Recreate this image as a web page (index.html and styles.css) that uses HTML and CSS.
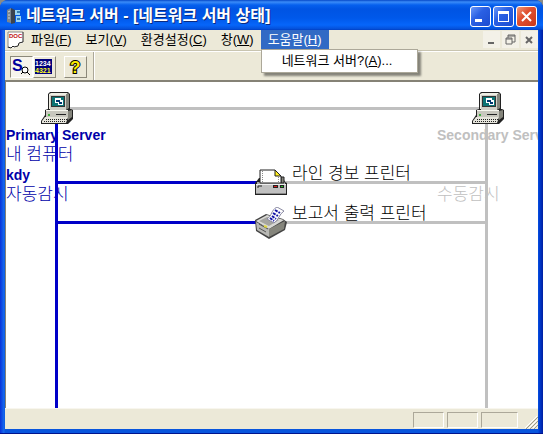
FILE: index.html
```
<!DOCTYPE html>
<html lang="ko">
<head>
<meta charset="UTF-8" />
<title>네트워크 서버 - [네트워크 서버 상태]</title>
<meta name="viewport" content="width=device-width, initial-scale=1" />
<link rel="stylesheet" href="styles.css">
</head>
<body>

<!-- shared icon -->
<svg class="defs" aria-hidden="true">
  <symbol id="computer" viewBox="0 0 32 32">
    <path d="M7 2l2-2h18l2 2v15h1l2 1v9l-5 5H0v-3l4-6V18l3-1z" fill="#222"/>
    <path d="M8 2l2-1h17l-2 2v14H8z" fill="#efeee4"/>
    <path d="M25 3l2-2 1 1v14l-3 2z" fill="#85857c"/>
    <path d="M9 3h16v15H9z" fill="#d0cfc6"/>
    <path d="M10 4h14v11H10z" fill="#333"/>
    <path d="M11 5h12v9H11z" fill="#0c7474"/>
    <path d="M14 6h6v5h-6zM17 8h5v5h-5z" fill="#fff"/>
    <path d="M15 8h4v2h-4zM18 10h3v2h-3z" fill="#003870"/>
    <path d="M5 19h22v6H5z" fill="#c8c7be"/>
    <path d="M5 18h22v1H5z" fill="#f8f8f0"/>
    <path d="M27 19l4-1v7l-4 3z" fill="#85857c"/>
    <path d="M7 22h2v2H7z" fill="#40b040"/>
    <path d="M15 22h10v1H15z" fill="#222"/>
    <path d="M4 25h23l-2 6H1v-2z" fill="#e6e5dc"/>
    <path d="M5 27.500h21M3 29.500h21" stroke="#222" stroke-dasharray="1 1"/>
  </symbol>
</svg>

<div class="window">
  <header class="titlebar">
    <svg class="app-icon" viewBox="0 0 16 16" aria-hidden="true">
      <path d="M1 2l4-2v15l-4-1z" fill="#7c858c"/>
      <path d="M5 0l4 2v13l-4 1z" fill="#3c444e"/>
      <path d="M2 4l2-1M2 7h2M2 10h2" stroke="#c8d4dc"/>
      <path d="M9 2h5v5H9zM10 8h5v6h-5z" fill="#9bd4f2"/>
      <path d="M11 3h3v2h-3zM11 10h3v2h-3z" fill="#397eaf"/>
    </svg>
    <h1>네트워크 서버 - [네트워크 서버 상태]</h1>
    <div class="caption-buttons">
      <button class="caption" aria-label="최소화"><svg viewBox="0 0 19 19"><path d="M4 12h7v3H4z" fill="#fff"/></svg></button>
      <button class="caption" aria-label="최대화"><svg viewBox="0 0 19 19"><path d="M4 4h11v11H4zM5 7v7h9V7z" fill="#fff" fill-rule="evenodd"/></svg></button>
      <button class="caption close" aria-label="닫기"><svg viewBox="0 0 19 19"><path d="M5 5l9 9M14 5l-9 9" stroke="#fff" stroke-width="2"/></svg></button>
    </div>
  </header>

  <nav class="menubar">
    <svg class="doc-icon" viewBox="0 0 16 16" aria-hidden="true">
      <path d="M0 0h15v11l-4 1-2 3-3 1-3-1-3 1z" fill="#fff"/>
      <path d="M0 16V0h15" stroke="#888" fill="none"/>
      <path d="M15 0v10l-4 1-1 3-4 1-1-1-2 2-3-1" stroke="#222" fill="none"/>
      <text x="1" y="6">DOC</text>
    </svg>
    <button class="menu">파일(<u>F</u>)</button>
    <button class="menu">보기(<u>V</u>)</button>
    <button class="menu">환경설정(<u>C</u>)</button>
    <button class="menu">창(<u>W</u>)</button>
    <div class="menu-wrap">
      <button class="menu open" aria-expanded="true">도움말(<u>H</u>)</button>
      <div class="dropdown">
        <button>네트워크 서버?(<u>A</u>)...</button>
      </div>
    </div>
    <div class="mdi-buttons">
      <button aria-label="창 최소화"><svg viewBox="0 0 16 16"><path d="M5 10h6v2H5z" fill="#666"/></svg></button>
      <button aria-label="창 복원"><svg viewBox="0 0 16 16"><path d="M6 6V3h7v7h-3M6 4h7M4 6h6v6H4zM4 7h6" fill="none" stroke="#666"/></svg></button>
      <button aria-label="창 닫기"><svg viewBox="0 0 16 16"><path d="M5 5l6 6M11 5l-6 6" stroke="#666" stroke-width="2"/></svg></button>
    </div>
  </nav>

  <div class="toolbar">
    <div class="tools">
      <button class="tool pressed" aria-label="상태 보기">
        <svg viewBox="0 0 20 20" aria-hidden="true"><text class="glyph-s" x="1" y="14">S</text><circle cx="14" cy="13" r="3" fill="#fff" stroke="#000"/><path d="M12 15l-2 2M16 15l3 3" stroke="#000"/></svg>
      </button>
      <button class="tool" aria-label="번호 보기">
        <svg viewBox="0 0 20 20" aria-hidden="true"><path d="M1 2h17v15H1z" fill="#00007c"/><text class="glyph-n" x="1" y="9">1234</text><text class="glyph-n yellow" x="1" y="16">4321</text></svg>
      </button>
      <button class="tool help" aria-label="도움말">
        <svg viewBox="0 0 20 20" aria-hidden="true"><text class="glyph-q" x="5" y="16">?</text></svg>
      </button>
    </div>
  </div>

  <main class="diagram">
    <div class="server primary">
      <p>Primary Server</p>
      <p>내 컴퓨터</p>
      <p>kdy</p>
      <p>자동감시</p>
    </div>
    <div class="server secondary">
      <p>Secondary Server</p>
      <p></p>
      <p></p>
      <p>수동감시</p>
    </div>

    <i class="line top"></i>
    <i class="line row1 idle"></i>
    <i class="line row2 idle"></i>
    <i class="line row1 active"></i>
    <i class="line row2 active"></i>
    <i class="line down idle-down"></i>
    <i class="line down active-down"></i>

    <svg class="node pc-left" aria-hidden="true"><use href="#computer"/></svg>
    <svg class="node pc-right" aria-hidden="true"><use href="#computer"/></svg>

    <svg class="node device1" viewBox="0 0 32 32" aria-hidden="true">
      <path d="M1 14l3-4h24l2 4 2 1v12H0V15z" fill="#222"/>
      <path d="M2 14h28v2H2z" fill="#aaa"/>
      <path d="M26 9h3v6h-3z" fill="#85857c" stroke="#222"/>
      <path d="M5 2h15l6 6v7H5z" fill="#fff" stroke="#222"/>
      <path d="M7.500 3v12M23.500 9v6" stroke="#888" stroke-dasharray="1 1"/>
      <path d="M20 2v6h6z" fill="#ffef20" stroke="#222"/>
      <path d="M1 16h30v10H1z" fill="#c0c0c0"/>
      <path d="M1 16.500h30" stroke="#eee"/>
      <path d="M1 25.500h30" stroke="#888"/>
      <path d="M3 20v-2h4" stroke="#222" fill="none"/>
      <path d="M18 17h5v3h-5zM25 17h4v3h-4z" fill="#222"/>
      <path d="M19 18h3v1h-3z" fill="#e02020"/>
      <path d="M26 18h2v1h-2z" fill="#20c020"/>
    </svg>
    <svg class="node device2" viewBox="0 0 32 32" aria-hidden="true">
      <path d="M0 13l11-6 17 5 4 3-2 8-16 9L1 24z" fill="#444"/>
      <path d="M1 14l11-6 17 5-15 9z" fill="#d8d8d4"/>
      <path d="M1 15l13 7v8L2 23z" fill="#b8b8b4"/>
      <path d="M14 22l16-8-1 8-15 8z" fill="#85857c"/>
      <path d="M4 14l8-4 12 3-10 6z" fill="#a4a4a0"/>
      <path d="M12 12c5-3 4-9 10-12l7 4c-5 3-5 9-10 12z" fill="#fff" stroke="#8888a0"/>
      <path d="M20 3l5 3M18 6l5 3M17 9l4 3M15 11l4 3" stroke="#1515a5" stroke-width="2" stroke-dasharray="3 1"/>
      <path d="M4 17l9 5M4 21l7 4" stroke="#555"/>
      <path d="M9 19l3 1" stroke="#e0d840" stroke-width="2"/>
    </svg>

    <p class="device-name name1">라인 경보 프린터</p>
    <p class="device-name name2">보고서 출력 프린터</p>
  </main>

  <footer class="statusbar">
    <span class="pane"></span>
    <span class="pane"></span>
    <span class="pane wide"></span>
    <svg class="grip" viewBox="0 0 13 13" aria-hidden="true">
      <path d="M1 13L13 1M5 13l8-8M9 13l4-4" stroke="#9c998a"/>
      <path d="M0 12L12 0M4 12l8-8M8 12l4-4" stroke="#fff"/>
    </svg>
  </footer>
</div>

</body>
</html>
```
FILE: styles.css
```
* {
  box-sizing: border-box;
}
body {
  margin: 0;
  background: #8b8b86;
  font-family: "Liberation Sans", "Noto Sans CJK KR", sans-serif;
  font-size: 13px;
  color: #000;
}
button {
  margin: 0;
  padding: 0;
  border: none;
  background: none;
  font: inherit;
  color: inherit;
}
h1, p {
  margin: 0;
}
svg {
  display: block;
}
.defs {
  position: absolute;
  width: 0;
  height: 0;
}
.window {
  display: flex;
  flex-direction: column;
  height: 100vh;
  padding: 0 5px 4px;
  background: linear-gradient(90deg, #0831d9, #166aee 4px, #0855dd 5px, #0855dd calc(100% - 5px), #0040d8 calc(100% - 4px), #001ea0);
  border-bottom: 1px solid #00138c;
  border-radius: 8px 8px 0 0;
  overflow: hidden;
}

/* title bar */
.titlebar {
  display: flex;
  flex: none;
  align-items: center;
  height: 30px;
  margin: 0 -5px;
  padding: 2px 6px 0;
  background: linear-gradient(#0548c8, #3a8cf8 2px, #0660ee 5px, #0054e3 9px, #0058ea 18px, #0666fa 25px, #0450d8 29px, #003cc0);
}
.app-icon {
  width: 16px;
  height: 16px;
}
h1 {
  flex: 1;
  padding-left: 4px;
  font-size: 16px;
  line-height: 20px;
  font-weight: bold;
  white-space: nowrap;
  color: #fff;
  text-shadow: 1px 1px #0a2a80;
}
.caption-buttons {
  display: flex;
  gap: 2px;
}
.caption {
  width: 21px;
  height: 21px;
  border: 1px solid #fff;
  border-radius: 3px;
  background: linear-gradient(135deg, #6a98f8, #2a60e4 40%, #1c4cd0);
}
.caption svg {
  width: 19px;
  height: 19px;
}
.caption.close {
  background: linear-gradient(135deg, #f09878, #e05030 40%, #c83818);
}

/* menu */
.menubar {
  display: flex;
  flex: none;
  height: 21px;
  background: #ece9d8;
  border-bottom: 1px solid #c8c4b0;
}
.doc-icon {
  width: 16px;
  height: 16px;
  margin: 2px 0 0 3px;
  overflow: visible;
}
.doc-icon text {
  font-size: 6px;
  font-weight: bold;
  fill: #c01010;
}
.menu {
  height: 19px;
  padding: 0 7px;
  line-height: 19px;
  white-space: nowrap;
}
.menu.open {
  background: #316ac5;
  color: #fff;
}
.menu-wrap {
  position: relative;
}
.dropdown {
  position: absolute;
  top: 19px;
  left: 0;
  z-index: 2;
  width: 157px;
  height: 24px;
  padding: 2px;
  border: 1px solid #aca899;
  background: #fff;
  box-shadow: 3px 3px 2px #00000070;
}
.dropdown button {
  width: 100%;
  padding-left: 18px;
  line-height: 18px;
  text-align: left;
  white-space: nowrap;
}
.mdi-buttons {
  display: flex;
  gap: 2px;
  margin-left: auto;
  padding-top: 1px;
}
.mdi-buttons button {
  width: 17px;
  height: 17px;
  background: #f3f1e8;
}
.mdi-buttons svg {
  width: 16px;
  height: 16px;
}

/* toolbar */
.toolbar {
  flex: none;
  height: 29px;
  background: #ece9d8;
  border-top: 1px solid #fff;
}
.tools {
  display: flex;
  width: 89px;
  height: 28px;
  padding: 4px 0 0 5px;
  border-right: 1px solid #aca899;
  box-shadow: 1px 0 #fff;
}
.tool {
  width: 23px;
  height: 22px;
  border: 1px solid;
  border-color: #fff #8c897a #8c897a #fff;
}
.tool svg {
  width: 20px;
  height: 20px;
}
.tool.pressed {
  border-color: #8c897a #fff #fff #8c897a;
  background: #f7f5ed;
}
.tool.help {
  margin-left: 8px;
}
.glyph-s {
  font-size: 16px;
  font-weight: bold;
  fill: #00009c;
}
.glyph-n {
  font-size: 7px;
  font-weight: bold;
  fill: #fff;
}
.glyph-n.yellow {
  fill: #ffff20;
}
.glyph-q {
  font-size: 17px;
  font-weight: bold;
  fill: #ffee00;
  stroke: #000;
  stroke-width: 2px;
  paint-order: stroke;
}

/* network diagram */
.diagram {
  position: relative;
  flex: 1;
  min-height: 0;
  overflow: hidden;
  background: #fff;
  border-top: 2px solid #858276;
  border-left: 1px solid #858276;
}
.server {
  position: absolute;
  top: 43px;
  font-size: 14px;
  line-height: 20px;
  white-space: nowrap;
}
.server p {
  height: 20px;
}
.server p:nth-child(even) {
  font-size: 17px;
  font-weight: 300;
}
.server p:nth-child(odd) {
  font-weight: bold;
}
.primary {
  left: 0;
  color: #0000a8;
}
.secondary {
  left: calc(100% - 101px);
  color: #c0c0c0;
}
.line {
  position: absolute;
  height: 3px;
  background: #c0c0c0;
}
.top {
  top: 25px;
  left: 51px;
  right: 51px;
}
.row1 {
  top: 99px;
}
.row2 {
  top: 139px;
}
.idle {
  left: 50%;
  right: 51px;
}
.active {
  left: 51px;
  right: 50%;
  background: #0000c8;
}
.down {
  top: 32px;
  bottom: 0;
  width: 3px;
  height: auto;
}
.idle-down {
  right: 50px;
}
.active-down {
  left: 49px;
  background: #0000c8;
}
.node {
  position: absolute;
  width: 32px;
  height: 32px;
}
.pc-left {
  top: 10px;
  left: 35px;
}
.pc-right {
  top: 10px;
  right: 34px;
}
.device1 {
  top: 86px;
  left: calc(50% - 17px);
}
.device2 {
  top: 125px;
  left: calc(50% - 17px);
}
.device-name {
  position: absolute;
  left: calc(50% + 20px);
  font-size: 17px;
  font-weight: 300;
  line-height: 20px;
  white-space: nowrap;
}
.name1 {
  top: 82px;
}
.name2 {
  top: 122px;
}

/* status bar */
.statusbar {
  display: flex;
  flex: none;
  justify-content: flex-end;
  gap: 3px;
  height: 21px;
  padding-top: 3px;
  background: #ece9d8;
  border-top: 1px solid #f8f6ee;
}
.pane {
  width: 31px;
  height: 16px;
  border: 1px solid;
  border-color: #aca899 #fff #fff #aca899;
}
.pane.wide {
  width: 37px;
}
.grip {
  align-self: flex-end;
  width: 13px;
  height: 13px;
  margin-left: 4px;
}
```
